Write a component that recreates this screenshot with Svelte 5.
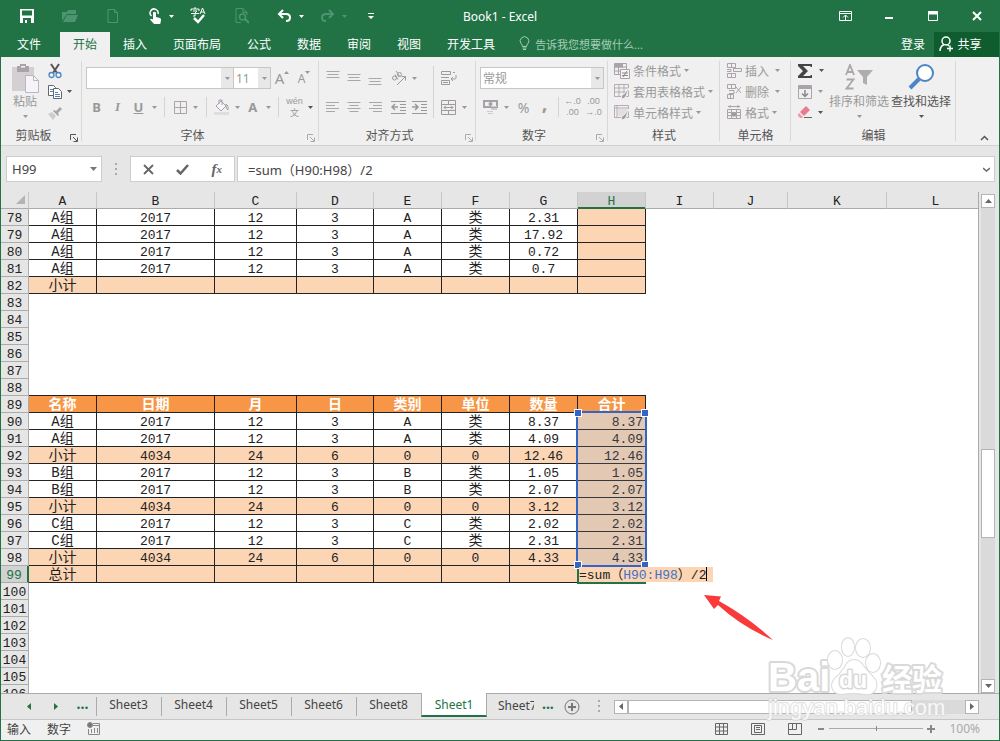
<script lang="ts">
	type Row = { n: number; kind?: string; cells?: string[] };

	const tabs = ['开始', '插入', '页面布局', '公式', '数据', '审阅', '视图', '开发工具'];
	const sheets = ['Sheet3', 'Sheet4', 'Sheet5', 'Sheet6', 'Sheet8', 'Sheet1'];

	const columns = [
		{ name: 'A', width: 68 },
		{ name: 'B', width: 118 },
		{ name: 'C', width: 82 },
		{ name: 'D', width: 77 },
		{ name: 'E', width: 68 },
		{ name: 'F', width: 68 },
		{ name: 'G', width: 68 },
		{ name: 'H', width: 68 },
		{ name: 'I', width: 68 },
		{ name: 'J', width: 74 },
		{ name: 'K', width: 99 },
		{ name: 'L', width: 98 },
	];

	const filled: Record<number, Row> = {};

	function put(n: number, kind: string, text: string) {
		filled[n] = { n, kind, cells: text.split(',') };
	}

	put(78, 'data', 'A组,2017,12,3,A,类,2.31,');
	put(79, 'data', 'A组,2017,12,3,A,类,17.92,');
	put(80, 'data', 'A组,2017,12,3,A,类,0.72,');
	put(81, 'data', 'A组,2017,12,3,A,类,0.7,');
	put(82, 'data sum', '小计,,,,,,,');
	put(89, 'data head', '名称,日期,月,日,类别,单位,数量,合计');
	put(90, 'data', 'A组,2017,12,3,A,类,8.37,8.37');
	put(91, 'data', 'A组,2017,12,3,A,类,4.09,4.09');
	put(92, 'data sum', '小计,4034,24,6,0,0,12.46,12.46');
	put(93, 'data', 'B组,2017,12,3,B,类,1.05,1.05');
	put(94, 'data', 'B组,2017,12,3,B,类,2.07,2.07');
	put(95, 'data sum', '小计,4034,24,6,0,0,3.12,3.12');
	put(96, 'data', 'C组,2017,12,3,C,类,2.02,2.02');
	put(97, 'data', 'C组,2017,12,3,C,类,2.31,2.31');
	put(98, 'data sum', '小计,4034,24,6,0,0,4.33,4.33');
	put(99, 'data sum', '总计,,,,,,,');

	const rows: Row[] = Array.from({ length: 29 }, (_, i) => filled[78 + i] ?? { n: 78 + i });

	let nameBox = 'H99';
	let formula = '=sum（H90:H98）/2';
	let fontName = '';
	let fontSize = '11';
	let numberFormat = '常规';
	let zoom = 50;
	let activeTab = '开始';
	let activeSheet = 'Sheet1';

	const isCjk = (s: string) => /[\u4e00-\u9fff]/.test(s);
</script>

{#snippet caret()}
	<svg class="caret" width="5" height="3" viewBox="0 0 5 3"><path d="M0 0h5L2.5 3z" fill="currentColor" /></svg>
{/snippet}

{#snippet drop(label: string)}
	<button class="drop" aria-label={label}>{@render caret()}</button>
{/snippet}

{#snippet launcher()}
	<button class="launcher" aria-label="更多选项">
		<svg width="8" height="8" viewBox="0 0 8 8" fill="none" stroke="currentColor"><path d="M.5 6V.5H6M3 3l4 4M7.5 3.500v4h-4" /></svg>
	</button>
{/snippet}

{#snippet lines(widths: number[], align: string, top: number)}
	<svg width="16" height="18" viewBox="0 0 16 18" stroke="#a8a8a8">
		{#each widths as w, i}
			<path d="M{align === 'left' ? 1 : align === 'right' ? 15 - w : 8 - w / 2} {top + i * 3 + 0.5}h{w}" />
		{/each}
	</svg>
{/snippet}

<div class="window">
	<header class="titlebar">
		<div class="quick">
			<button aria-label="保存">
				<svg width="14" height="14" viewBox="0 0 14 14"><path fill="#fff" fill-rule="evenodd" d="M0 0h14v14H0zM2 1.500v5h10v-5zM3 9v5h2v-3h2v3h4V9z" /></svg>
			</button>
			<button class="off" aria-label="打开">
				<svg width="16" height="14" viewBox="0 0 16 14"><path fill="currentColor" d="M0 12V3h5l1-2h8v4H5zM5 6h11l-3 7H1z" /></svg>
			</button>
			<button class="off" aria-label="新建">
				<svg width="12" height="14" viewBox="0 0 12 14" fill="none" stroke="currentColor"><path d="M1 .5h6.500l3 3v10H1zM7.500.5v3h3" /></svg>
			</button>
			<button class="split" aria-label="触摸模式">
				<svg width="15" height="17" viewBox="0 0 15 17"><path d="M3.500 8A4 4 0 1 1 10 6" fill="none" stroke="#fff" stroke-width="1.500" /><path d="M5 4.500q1.500-1.500 3 0V9l4 1q1.500.5 1 2.500l-.8 3.500H6L2 11.500q.5-1.500 3 0z" fill="#fff" /></svg>
				{@render caret()}
			</button>
			<button aria-label="拼写检查">
				<svg width="18" height="18" viewBox="0 0 18 18" fill="none" stroke="#fff"><path d="M1 4V2h8v2M5 0v2M3 4h4L5 6v3H3M1 6.500h8M10 7l2.500-6L15 7M11 5h3" /><path d="M4 11l4 4 6-7" stroke-width="2.500" /></svg>
			</button>
			<button class="off" aria-label="打印预览">
				<svg width="14" height="16" viewBox="0 0 14 16" fill="none" stroke="currentColor"><path d="M6 14.500H1V.5h7l4 4V7M8 .5v4h4" /><circle cx="7.500" cy="9" r="3" stroke-width="1.500" /><path d="M10 11l4 4" stroke-width="2" /></svg>
			</button>
			<button class="split" aria-label="撤消">
				<svg width="16" height="14" viewBox="0 0 16 14" fill="none" stroke="#fff" stroke-width="2"><path d="M6 1L2 5l4 4M2 5h7q4 0 4 3.500T9 12" /></svg>
				{@render caret()}
			</button>
			<button class="split off" aria-label="恢复">
				<svg width="16" height="14" viewBox="0 0 16 14" fill="none" stroke="currentColor" stroke-width="2"><path d="M9 1l4 4-4 4M13 5H6Q2 5 2 8.500T6 12" /></svg>
				{@render caret()}
			</button>
			<button aria-label="自定义快速访问工具栏">
				<svg width="6" height="7" viewBox="0 0 6 7" fill="#fff"><path d="M0 0h6v1H0zM0 3h6L3 6z" /></svg>
			</button>
		</div>
		<div class="title">Book1 - Excel</div>
		<div class="controls">
			<button aria-label="功能区显示选项">
				<svg width="13" height="10" viewBox="0 0 13 10" fill="none" stroke="#fff"><path d="M.5.5h12v9H.5zM1 2.500h11M6.500 9V4M4 6.500L6.500 4 9 6.500" /></svg>
			</button>
			<button aria-label="最小化"><svg width="10" height="10" viewBox="0 0 10 10"><path d="M1 6h8v2H1z" fill="#fff" /></svg></button>
			<button aria-label="最大化"><svg width="10" height="10" viewBox="0 0 10 10" fill="none" stroke="#fff"><path d="M.5.5h9v9h-9z" /><path d="M0 2h10" stroke-width="3" /></svg></button>
			<button aria-label="关闭"><svg width="10" height="10" viewBox="0 0 10 10"><path d="M1 1l8 8M9 1L1 9" stroke="#fff" stroke-width="2" /></svg></button>
		</div>
	</header>

	<nav class="tabs">
		<button class="file">文件</button>
		{#each tabs as tab}
			<button class:active={tab === activeTab} on:click={() => (activeTab = tab)}>{tab}</button>
		{/each}
		<button class="tell">
			<svg width="11" height="15" viewBox="0 0 11 15" fill="none" stroke="currentColor"><path d="M3.500 10.500Q3.500 9 2 7.500a4.300 4.300 0 1 1 7 0Q7.500 9 7.500 10.500zM3.500 12h4M4 13.500h3" /></svg>
			告诉我您想要做什么...
		</button>
		<button class="login">登录</button>
		<button class="share">
			<svg width="15" height="16" viewBox="0 0 15 16" fill="none" stroke="#fff" stroke-width="1.500"><circle cx="7" cy="5" r="4" /><path d="M1 15q0-4.500 4-6.500M8.500 9l1.500 1M8 12.500h6M11 9.500v6" /></svg>
			共享
		</button>
	</nav>

	<section class="ribbon">
		<div class="group clipboard">
			<div class="body">
				<button class="big">
					<svg width="27" height="29" viewBox="0 0 27 29"><path d="M0 3h22v24H0z" fill="#d3cfd3" /><path d="M5 2h3V0h6v2h3v6H5zM9 2v2h4V2z" fill="#a8a4a8" fill-rule="evenodd" /><path d="M13.500 11.500h8l5 5v12h-13z" fill="#f7f3fa" stroke="#bcb6bc" /><path d="M21.500 11.500v5h5" fill="none" stroke="#bcb6bc" /></svg>
					<span>粘贴</span>
					{@render caret()}
				</button>
				<div class="stack dark">
					<button class="item" aria-label="剪切">
						<svg width="16" height="16" viewBox="0 0 16 16" fill="none"><path d="M4 1l6 9M12 1l-6 9" stroke="#555" stroke-width="2" /><circle cx="4.500" cy="12" r="2.500" stroke="#4a86c5" stroke-width="1.300" /><circle cx="11.500" cy="12" r="2.500" stroke="#4a86c5" stroke-width="1.300" /></svg>
					</button>
					<button class="item" aria-label="复制">
						<svg width="16" height="14" viewBox="0 0 16 14" fill="#fff" stroke="#666"><path d="M1.500.5h5l2 2v8h-7z" /><path d="M6.500 3.500h5l3 3v7h-8z" /><path d="M3 4.500h3M3 6.500h3M8 7.500h3M8 9.500h5M8 11.500h5" stroke="#4a86c5" /></svg>
						{@render caret()}
					</button>
					<button class="item" aria-label="格式刷">
						<svg width="16" height="15" viewBox="0 0 16 15"><path d="M1 9l4-2 4 4-3 4z" fill="#cfcbcf" /><path d="M6 6l1-1 2 1 4-4 2 2-4 4 1 2-1 1z" fill="#a8a4a8" /></svg>
					</button>
				</div>
			</div>
			<div class="caption dark">剪贴板{@render launcher()}</div>
		</div>

		<div class="group font">
			<div class="body rows">
				<div class="line">
					<div class="combo grow">
						<input aria-label="字体" bind:value={fontName} />
						{@render drop('选择字体')}
					</div>
					<div class="combo size">
						<input aria-label="字号" bind:value={fontSize} />
						{@render drop('选择字号')}
					</div>
					<button class="ib letter" aria-label="增大字号">A<svg width="5" height="14" viewBox="0 0 5 14"><path d="M0 3h5L2.500 0z" fill="#999" /></svg></button>
					<button class="ib letter small" aria-label="减小字号">A<svg width="5" height="14" viewBox="0 0 5 14"><path d="M0 0h5L2.500 3z" fill="#999" /></svg></button>
				</div>
				<div class="line">
					<button class="ib"><b>B</b></button>
					<button class="ib"><i>I</i></button>
					<button class="ib"><b><u>U</u></b></button>
					{@render drop('下划线')}
					<span class="sep"></span>
					<button class="ib" aria-label="边框">
						<svg width="13" height="13" viewBox="0 0 13 13" fill="none" stroke="#aaa3aa"><path d="M.5.5h12v12H.5zM6.500 0v13M0 6.500h13" /></svg>
					</button>
					{@render drop('边框样式')}
					<span class="sep"></span>
					<button class="ib" aria-label="填充颜色">
						<svg width="16" height="16" viewBox="0 0 16 16"><path d="M7 2l5 5-5 5-5-5z" fill="#f7f3fa" stroke="#a8a0a8" /><path d="M5 5V1h3v5M12 5q3 1 2 6-2-1-2-4z" fill="none" stroke="#a8a0a8" /><path d="M0 13h15v3H0z" fill="#e2dce2" /></svg>
					</button>
					{@render drop('选择填充颜色')}
					<button class="ib"><b>A</b></button>
					{@render drop('字体颜色')}
					<span class="sep"></span>
					<button class="ib pinyin"><span>wén</span><span>文</span></button>
					<span class="dark">{@render drop('拼音')}</span>
				</div>
			</div>
			<div class="caption">字体{@render launcher()}</div>
		</div>

		<div class="group align">
			<div class="body">
				<div class="rows">
					<div class="line">
						<button class="ib" aria-label="顶端对齐">{@render lines([13, 11, 13], 'center', 2)}</button>
						<button class="ib" aria-label="垂直居中">{@render lines([13, 11, 13], 'center', 5)}</button>
						<button class="ib" aria-label="底端对齐">{@render lines([13, 11, 13], 'center', 9)}</button>
						<button class="ib shift" aria-label="方向">
							<svg width="16" height="16" viewBox="0 0 16 16" fill="none" stroke="#999"><circle cx="3.500" cy="8" r="2" /><path d="M4 4.500l3 5M5 1l4 6" /><circle cx="8.500" cy="4.500" r="2" /><path d="M6 15l8-8M10.500 6.500H14.500V10.500" /></svg>
						</button>
						{@render drop('文字方向')}
					</div>
					<div class="line">
						<button class="ib" aria-label="左对齐">{@render lines([13, 9, 13, 9], 'left', 4)}</button>
						<button class="ib" aria-label="居中">{@render lines([13, 9, 13, 9], 'center', 4)}</button>
						<button class="ib" aria-label="右对齐">{@render lines([13, 9, 13, 9], 'right', 4)}</button>
						<button class="ib shift" aria-label="减少缩进">
							<svg width="16" height="14" viewBox="0 0 16 14" fill="none" stroke="#999"><path d="M0 1.500h15M9 4.500h6M9 7.500h6M9 10.500h6M0 13.500h15" /><path d="M1 7h6M4 4L1 7l3 3" stroke-width="1.500" /></svg>
						</button>
						<button class="ib" aria-label="增加缩进">
							<svg width="16" height="14" viewBox="0 0 16 14" fill="none" stroke="#999"><path d="M0 1.500h15M9 4.500h6M9 7.500h6M9 10.500h6M0 13.500h15" /><path d="M0 7h6M3 4l3 3-3 3" stroke-width="1.500" /></svg>
						</button>
					</div>
				</div>
				<span class="sep tall"></span>
				<div class="rows">
					<div class="line">
						<button class="ib" aria-label="自动换行">
							<svg width="16" height="15" viewBox="0 0 16 15" fill="none" stroke="#a09aa0"><path d="M.5.5h9v3h-9zM0 6.500h8M.5 9.500h8v4h-8zM2 11.500h5M12 1.500h2M15 4v3q0 1-2 1h-3M12 6l-2 2 2 2" /></svg>
						</button>
					</div>
					<div class="line">
						<button class="ib" aria-label="合并后居中">
							<svg width="15" height="15" viewBox="0 0 15 15" fill="none" stroke="#a09aa0"><path d="M.5.5h14v14H.5zM0 4.500h15M0 10.500h15M7.500 0v4M7.500 11v4M3 7.500h9M5 5.500l-2 2 2 2M10 5.500l2 2-2 2" /></svg>
						</button>
						{@render drop('合并')}
					</div>
				</div>
			</div>
			<div class="caption">对齐方式{@render launcher()}</div>
		</div>

		<div class="group number">
			<div class="body rows">
				<div class="line">
					<div class="combo grow">
						<input aria-label="数字格式" bind:value={numberFormat} />
						{@render drop('选择数字格式')}
					</div>
				</div>
				<div class="line">
					<button class="ib" aria-label="会计数字格式">
						<svg width="17" height="16" viewBox="0 0 17 16"><path d="M1 1h15v8H1zM3 3v4h11V3z" fill="#a8a0a8" fill-rule="evenodd" /><circle cx="8.500" cy="5" r="2" fill="#a8a0a8" /><path d="M9 7h6v1H9zM9 9h6v2H9zM5 12h6v1H5zM6 14h5v1H6z" fill="#d0cad0" /></svg>
					</button>
					{@render drop('货币')}
					<button class="ib pct">%</button>
					<button class="ib comma">,</button>
					<span class="sep"></span>
					<button class="ib decimals"><span>←.0</span><span>.00</span></button>
					<button class="ib decimals"><span>.00</span><span>→.0</span></button>
				</div>
			</div>
			<div class="caption">数字{@render launcher()}</div>
		</div>

		<div class="group styles">
			<div class="body stack">
				<button class="item">
					<svg width="16" height="16" viewBox="0 0 16 16" fill="none" stroke="#aaa3aa"><path d="M.5.500h12v11H.5zM0 4h12M0 8h7M4.500 0v12M8.500 0v5" /><path d="M1 1h7v3H1z" fill="#aaa3aa" /><path d="M6.500 6.500h9v9h-9z" fill="#f4f4f4" /><path d="M8 10h6M8 12.500h6M13 8l-4 6" stroke="#888" /></svg>
					条件格式{@render caret()}
				</button>
				<button class="item">
					<svg width="16" height="15" viewBox="0 0 16 15" fill="none" stroke="#b4adb4"><path d="M.5.500h14v12H.5zM0 4h15M0 8h15M5 0v13M10 0v13" /><path d="M15 4l-5 6-2 1-1 4q4 0 5-3z" fill="#a09aa0" stroke="#f0f0f0" /></svg>
					套用表格格式{@render caret()}
				</button>
				<button class="item">
					<svg width="16" height="15" viewBox="0 0 16 15" fill="none" stroke="#b4adb4"><path d="M.5.500h14v12H.5zM0 3h15M3 0v13" /><path d="M4 4h9v7H4z" fill="#e4dee4" stroke="none" /><path d="M15 4l-5 6-2 1-1 4q4 0 5-3z" fill="#a09aa0" stroke="#f0f0f0" /></svg>
					单元格样式{@render caret()}
				</button>
			</div>
			<div class="caption">样式</div>
		</div>

		<div class="group cells">
			<div class="body stack">
				<button class="item">
					<svg width="15" height="15" viewBox="0 0 15 15" fill="none" stroke="#aaa3aa"><path d="M.5.500h8v4h-8zM.5 10.500h8v4h-8zM4.500 0v4M4.500 10v5M0 6.500h4v2H0M6.500 5.500h8v3h-8z" /></svg>
					插入<span></span>{@render caret()}
				</button>
				<button class="item">
					<svg width="15" height="15" viewBox="0 0 15 15" fill="none" stroke="#aaa3aa"><path d="M.5.500h8v4h-8zM.5 10.500h6v4h-6zM4.500 0v4M3.500 10v5M2 6.500h5v3H2M9 3l5 6M14 3l-5 6" /></svg>
					删除<span></span>{@render caret()}
				</button>
				<button class="item">
					<svg width="15" height="15" viewBox="0 0 15 15" fill="none" stroke="#aaa3aa"><path d="M1 1.500h12M3 0v3M11 0v3M.5 4.500h13v9H.5zM0 7.500h14M0 10.500h14M4.500 4v10M9.500 4v10" /><path d="M5 8h4v3H5z" fill="#999" /></svg>
					格式{@render caret()}
				</button>
			</div>
			<div class="caption">单元格</div>
		</div>

		<div class="group editing">
			<div class="body">
				<div class="stack">
					<button class="item dark" aria-label="自动求和">
						<svg width="15" height="14" viewBox="0 0 15 14"><path d="M0 0h14v3h-1l-1-1H5l5 5-5 5h7l1-1h1v3H0v-2l5-5-5-5z" fill="#444" /></svg>
						{@render caret()}
					</button>
					<button class="item" aria-label="填充">
						<svg width="14" height="14" viewBox="0 0 14 14" fill="none" stroke="#aaa3aa"><path d="M.5.500h13v13H.5z" /><path d="M1 2.500h12" stroke-width="3" /><path d="M7 5v6M4 8.500l3 3 3-3" stroke-width="1.500" stroke="#888" /></svg>
						{@render caret()}
					</button>
					<button class="item dark" aria-label="清除">
						<svg width="14" height="13" viewBox="0 0 14 13"><path d="M7 1l1-1 4 4-1 1-5 5-4-4z" fill="#ea7b8f" /><path d="M0 8l1-1 4 4-1 1H2L0 10z" fill="#f29aaa" /><path d="M6 11.500h8" stroke="#666" /></svg>
						{@render caret()}
					</button>
				</div>
				<button class="big">
					<svg width="28" height="26" viewBox="0 0 28 26"><path d="M1 11L5 1l4 10M2.500 8h5M1.500 15.500h7l-7 9h7" fill="none" stroke="#aaa6aa" stroke-width="1.800" /><path d="M12 6h16l-6 7v8l-4-2v-6z" fill="#b0acb0" /></svg>
					<span>排序和筛选</span>
					{@render caret()}
				</button>
				<button class="big dark">
					<svg width="28" height="26" viewBox="0 0 28 26"><circle cx="18" cy="9" r="8" fill="#fff" stroke="#4a86c5" stroke-width="2" /><path d="M12 15L3 24" stroke="#4a86c5" stroke-width="4" /></svg>
					<span>查找和选择</span>
					{@render caret()}
				</button>
			</div>
			<div class="caption">编辑</div>
		</div>

		<button class="collapse" aria-label="折叠功能区">
			<svg width="9" height="6" viewBox="0 0 9 6"><path d="M1 5l3.500-3.500L8 5" fill="none" stroke="#555" stroke-width="1.500" /></svg>
		</button>
	</section>

	<section class="formula-bar">
		<div class="field name">
			<input aria-label="名称框" bind:value={nameBox} />
			<button aria-label="名称列表"><svg width="7" height="4" viewBox="0 0 7 4"><path d="M0 0h7L3.500 4z" fill="#777" /></svg></button>
		</div>
		<span class="dots"></span>
		<div class="field actions">
			<button aria-label="取消"><svg width="11" height="11" viewBox="0 0 11 11"><path d="M1 1l9 9M10 1l-9 9" stroke="#666" stroke-width="1.800" /></svg></button>
			<button aria-label="输入"><svg width="13" height="11" viewBox="0 0 13 11"><path d="M1 6l3.500 3.500L12 1" fill="none" stroke="#666" stroke-width="2.500" /></svg></button>
			<button class="fx" aria-label="插入函数">f<small>x</small></button>
		</div>
		<div class="field formula">
			<input aria-label="编辑栏" bind:value={formula} />
			<button aria-label="展开编辑栏"><svg width="7" height="5" viewBox="0 0 7 5"><path d="M0 1l3.500 3L7 1" fill="none" stroke="#666" stroke-width="1.500" /></svg></button>
		</div>
	</section>

	<main class="workspace">
		<div class="sheet">
			<table>
				<colgroup>
					<col style="width: 28px" />
					{#each columns as col}
						<col style="width: {col.width}px" />
					{/each}
				</colgroup>
				<thead>
					<tr>
						<th class="corner" aria-label="全选"><svg width="9" height="9" viewBox="0 0 9 9"><path d="M9 0v9H0z" fill="#b4b4b4" /></svg></th>
						{#each columns as col}
							<th class:picked={col.name === 'H'}>{col.name}</th>
						{/each}
					</tr>
				</thead>
				<tbody>
					{#each rows as row}
						<tr class={row.kind} class:above={row.n === 88}>
							<th class:picked={row.n === 99}>{row.n}</th>
							{#each columns as col, c}
								<td class:used={c < 8} class:cjk={isCjk(row.cells?.[c] ?? '')} class:total={c === 7}>
									{row.cells?.[c] ?? ''}
									{#if row.n === 90 && c === 7}
										<div class="range"><i></i><i></i><i></i><i></i></div>
									{:else if row.n === 99 && c === 7}
										<div class="frame"></div>
										<div class="editor" role="textbox" tabindex="0" aria-label="H99">=sum（<span>H90:H98</span>）/2</div>
									{/if}
								</td>
							{/each}
						</tr>
					{/each}
				</tbody>
			</table>
			<svg class="arrow" width="70" height="48" viewBox="0 0 70 48"><path d="M0 1l17 1.500-2 4.500Q44 23 69 46 38 33 14 11l-4 4z" fill="#f9393a" /></svg>
		</div>
		<div class="vscroll">
			<button aria-label="向上滚动"><svg width="7" height="4" viewBox="0 0 7 4"><path d="M0 4h7L3.500 0z" fill="#666" /></svg></button>
			<div class="track"><div class="thumb"></div></div>
			<button aria-label="向下滚动"><svg width="7" height="4" viewBox="0 0 7 4"><path d="M0 0h7L3.500 4z" fill="#666" /></svg></button>
		</div>
	</main>

	<nav class="sheetbar">
		<div class="steps">
			<button aria-label="上一张"><svg width="4" height="7" viewBox="0 0 4 7"><path d="M4 0v7L0 3.500z" fill="#217346" /></svg></button>
			<button aria-label="下一张"><svg width="4" height="7" viewBox="0 0 4 7"><path d="M0 0v7l4-3.500z" fill="#217346" /></svg></button>
			<button class="more">...</button>
		</div>
		{#each sheets as name}
			<button class="tab" class:active={name === activeSheet} on:click={() => (activeSheet = name)}>{name}</button>
		{/each}
		<button class="cut">Sheet7</button>
		<button class="more">...</button>
		<button class="add" aria-label="新工作表">
			<svg width="16" height="16" viewBox="0 0 16 16" fill="none" stroke="#777"><circle cx="8" cy="8" r="7" /><path d="M8 4v8M4 8h8" stroke-width="2" /></svg>
		</button>
		<span class="dots"></span>
		<div class="hscroll">
			<button aria-label="向左滚动"><svg width="4" height="7" viewBox="0 0 4 7"><path d="M4 0v7L0 3.500z" fill="#666" /></svg></button>
			<div class="thumb"></div>
			<div class="rest"></div>
			<button aria-label="向右滚动"><svg width="4" height="7" viewBox="0 0 4 7"><path d="M0 0v7l4-3.500z" fill="#666" /></svg></button>
		</div>
	</nav>

	<footer class="status">
		<span>输入</span>
		<span>数字</span>
		<svg width="13" height="13" viewBox="0 0 13 13" fill="none" stroke="#888"><circle cx="3" cy="3" r="2.500" fill="#777" /><path d="M6 1.500h6.500v11h-11V7M6 3.500h6M4.500 7v4M7.500 6v5M10.500 6v5" /></svg>
		<div class="views">
			<button aria-label="普通"><svg width="13" height="12" viewBox="0 0 13 12" fill="none" stroke="#666"><path d="M.5.500h12v11H.5zM0 4h13M0 8h13M4.500 0v12M8.500 0v12" /></svg></button>
			<button aria-label="页面布局"><svg width="14" height="12" viewBox="0 0 14 12" fill="none" stroke="#666"><path d="M.5.500h13v11H.5zM3.500 2.500h7v7h-7zM5 4.500h4M5 6.500h4" /></svg></button>
			<button aria-label="分页预览"><svg width="14" height="12" viewBox="0 0 14 12" fill="none" stroke="#666"><path d="M.5.500h13v11H.5zM4.500 0v6.500M8.500 0v6.500H0" /></svg></button>
		</div>
		<button aria-label="缩小"><svg width="8" height="8" viewBox="0 0 8 8"><path d="M1 4h6" stroke="#888" stroke-width="2" /></svg></button>
		<input type="range" min="0" max="100" aria-label="缩放" bind:value={zoom} />
		<button aria-label="放大"><svg width="8" height="8" viewBox="0 0 8 8"><path d="M0 4h8M4 0v8" stroke="#888" stroke-width="2" /></svg></button>
		<span class="percent">100%</span>
	</footer>

	<svg class="watermark" width="180" height="92" viewBox="0 0 180 92">
		<g font-weight="bold">
			<text x="1" y="59" font-size="40">Bai</text>
			<text x="115" y="58" font-size="30">经验</text>
		</g>
		<g class="paw">
			<ellipse cx="68" cy="28" rx="7" ry="9" />
			<ellipse cx="81" cy="15" rx="6" ry="9" />
			<ellipse cx="96" cy="16" rx="7" ry="9" />
			<ellipse cx="106" cy="31" rx="7" ry="9" />
			<path d="M87 28q6 0 10 7 4 5 8 9 7 7 3 14-3 5-10 4-12-2-23 0-9 0-10-8 0-6 7-11l6-8q3-7 9-7z" />
		</g>
		<text class="inner" x="72" y="56" font-size="23" font-weight="bold">du</text>
		<text class="url" x="1" y="83" font-size="22">jingyan.baidu.com</text>
	</svg>
</div>

<style>
	:global(body) {
		margin: 0;
	}

	.window {
		position: relative;
		box-sizing: border-box;
		height: 100vh;
		display: flex;
		flex-direction: column;
		overflow: hidden;
		border: 1px solid #217346;
		border-top: 0;
		background: #e6e6e6;
		color: #444;
		font: 12px 'Noto Sans', 'Noto Sans CJK SC', sans-serif;
	}

	.window * {
		box-sizing: border-box;
	}

	button,
	input {
		font: inherit;
		color: inherit;
		background: none;
		border: 0;
		padding: 0;
		margin: 0;
		min-width: 0;
		outline: 0;
	}

	button {
		display: flex;
		align-items: center;
		justify-content: center;
		white-space: nowrap;
		flex-shrink: 0;
	}

	svg {
		flex-shrink: 0;
	}

	.titlebar {
		display: grid;
		grid-template-columns: 1fr auto 1fr;
		align-items: center;
		height: 32px;
		background: #217346;
		color: #fff;
	}

	.quick {
		display: flex;
		padding-left: 4px;
	}

	.quick button {
		width: 43px;
		height: 30px;
	}

	.quick .split {
		justify-content: flex-start;
		padding-left: 14px;
		gap: 6px;
	}

	.quick .off {
		color: #4f9470;
	}

	.controls {
		display: flex;
		justify-content: flex-end;
	}

	.controls button {
		width: 44px;
		height: 30px;
	}

	.tabs {
		display: flex;
		height: 25px;
		background: #217346;
		color: #fff;
	}

	.tabs button {
		padding: 0 13px 2px;
	}

	.tabs .file {
		width: 56px;
		margin-right: 3px;
	}

	.tabs .active {
		background: #f0f0f0;
		color: #217346;
	}

	.tabs .tell {
		gap: 5px;
		padding-left: 11px;
		font-size: 11px;
		color: #a5cdb6;
	}

	.tabs .login {
		margin-left: auto;
		padding: 0 9px 2px;
	}

	.tabs .share {
		width: 65px;
		padding: 0 12px 2px 0;
		gap: 3px;
		background: #0f5c2f;
	}

	.ribbon {
		display: flex;
		height: 89px;
		background: #f0f0f0;
		border-bottom: 1px solid #d2d2d2;
		color: #999;
	}

	.group {
		position: relative;
		display: flex;
		flex-direction: column;
		flex: 0 0 auto;
		padding: 0 4px;
	}

	.group::after {
		content: '';
		position: absolute;
		right: 0;
		top: 4px;
		bottom: 4px;
		border-right: 1px solid #d8d8d8;
	}

	.clipboard {
		width: 81px;
	}

	.font {
		width: 237px;
	}

	.align {
		width: 157px;
		padding: 0 3px;
	}

	.number {
		width: 132px;
	}

	.styles {
		width: 112px;
		padding: 0 6px;
	}

	.cells {
		width: 71px;
		padding: 0 7px;
	}

	.editing {
		width: 165px;
	}

	.body {
		display: flex;
		height: 68px;
	}

	.caption {
		position: relative;
		display: flex;
		align-items: center;
		justify-content: center;
		height: 20px;
		color: #555;
	}

	.clipboard .caption,
	.font .caption,
	.number .caption,
	.align .caption {
		padding-right: 16px;
	}

	.launcher {
		position: absolute;
		right: 0;
		bottom: 3px;
		color: #aaa;
	}

	.dark,
	.caption.dark .launcher {
		color: #555;
	}

	.rows {
		display: flex;
		flex-direction: column;
		gap: 7px;
		padding-top: 10px;
	}

	.line {
		display: flex;
		align-items: center;
		height: 22px;
	}

	.ib {
		width: 21px;
		height: 22px;
		font-size: 13px;
	}

	.shift {
		margin-left: 3px;
	}

	.ib i {
		font-family: 'Liberation Serif', serif;
		font-weight: bold;
	}

	.letter {
		width: 22px;
		font-size: 15px;
	}

	.small {
		font-size: 12px;
	}

	.pct {
		font-size: 14px;
		margin-left: 2px;
	}

	.comma {
		font-size: 20px;
		font-weight: bold;
		line-height: 12px;
		padding-bottom: 8px;
	}

	.pinyin,
	.decimals {
		flex-direction: column;
		font: 9px 'Liberation Sans', 'Noto Sans CJK SC', sans-serif;
	}

	.pinyin span {
		height: 12px;
		line-height: 12px;
	}

	.decimals span {
		height: 11px;
		line-height: 11px;
	}

	.drop {
		width: 10px;
		height: 20px;
	}

	.sep {
		width: 1px;
		height: 20px;
		margin: 0 5px;
		background: #d4d4d4;
	}

	.number .sep {
		margin: 0 3px;
	}

	.sep.tall {
		height: 52px;
		margin: 9px 4px 0 3px;
	}

	.combo {
		display: flex;
		align-items: center;
		height: 22px;
		border: 1px solid #c6c6c6;
		background: #fff;
	}

	.combo input {
		flex: 1;
		width: 0;
		padding-left: 2px;
	}

	.combo .drop {
		width: 12px;
		background: #e8e8e8;
	}

	.grow {
		flex: 1;
	}

	.combo.size {
		width: 37px;
		border-left: 0;
	}

	.big {
		flex-direction: column;
		justify-content: flex-start;
		width: 62px;
		padding-top: 7px;
	}

	.big span {
		height: 18px;
		line-height: 18px;
		margin-bottom: 4px;
	}

	.editing .big svg:first-child {
		margin-bottom: 3px;
	}

	.clipboard .big {
		width: 40px;
	}

	.stack {
		display: flex;
		flex-direction: column;
		align-items: stretch;
		padding-top: 3px;
	}

	.item {
		height: 21px;
		justify-content: flex-start;
		gap: 3px;
	}

	.clipboard .item {
		gap: 4px;
		padding-left: 2px;
	}

	.editing .stack {
		width: 35px;
		padding-left: 3px;
	}

	.editing .item {
		gap: 6px;
	}

	.collapse {
		margin: auto 10px 4px auto;
	}

	.formula-bar {
		display: flex;
		align-items: center;
		height: 46px;
		padding: 0 4px 0 5px;
	}

	.field {
		display: flex;
		height: 26px;
		border: 1px solid #cdcdcd;
		background: #fff;
		font-size: 13px;
	}

	.field input {
		flex: 1;
		width: 0;
	}

	.name {
		width: 96px;
		padding: 0 4px 0 5px;
	}

	.dots {
		width: 2px;
		height: 12px;
		margin: 0 13px;
		background: repeating-linear-gradient(#aaa 0 2px, transparent 2px 5px);
	}

	.actions {
		width: 105px;
		margin-right: 2px;
	}

	.actions button {
		flex: 1;
	}

	.fx {
		font: italic bold 15px 'Liberation Serif', serif;
		color: #666;
	}

	.fx small {
		font-size: 11px;
	}

	.formula {
		flex: 1;
		padding: 0 4px 0 10px;
	}

	.workspace {
		flex: 1;
		min-height: 0;
		display: flex;
	}

	.sheet {
		position: relative;
		flex: 1;
		min-width: 0;
		overflow: hidden;
		background: linear-gradient(#e6e6e6 17px, #fff 17px);
		border-right: 1px solid #ababab;
	}

	table {
		width: 984px;
		table-layout: fixed;
		border-collapse: separate;
		border-spacing: 0;
		font: 13px 'Liberation Mono', 'Noto Sans CJK SC', monospace;
		color: #222;
	}

	th,
	td {
		height: 17px;
		padding: 3px 0 0;
		line-height: 13px;
		font-weight: normal;
		text-align: center;
		white-space: nowrap;
	}

	th {
		background: #e6e6e6;
		border-right: 1px solid #ababab;
		border-bottom: 1px solid #ababab;
		overflow: hidden;
	}

	thead th {
		border-right-color: #c6c6c6;
	}

	.corner {
		text-align: right;
		padding: 0 3px 0 0;
	}

	thead .picked {
		background: #d2d2d2;
		color: #217346;
		border-bottom-color: #217346;
		box-shadow: inset 0 -1px #217346;
	}

	tbody .picked {
		background: #d2d2d2;
		color: #217346;
		border-right: 2px solid #217346;
	}

	td {
		position: relative;
	}

	.above .used {
		border-bottom: 1px solid #222;
	}

	.data .used {
		border-right: 1px solid #222;
		border-bottom: 1px solid #222;
	}

	.cjk {
		font-size: 14px;
	}

	.sum .used,
	.data .total {
		background: #fcd5b4;
	}

	.head .used {
		background: #f79646;
		color: #fff;
		font-weight: bold;
	}

	.data:not(.head) .total {
		text-align: right;
		padding-right: 2px;
	}

	/* nine rows of column H, starting at H90 */
	.range {
		position: absolute;
		z-index: 1;
		inset: -2px -2px auto -2px;
		height: 156px;
		border: 2px solid #3465c4;
		background: rgba(132, 148, 180, 0.2);
	}

	.range i {
		position: absolute;
		width: 6px;
		height: 6px;
		background: #3465c4;
		outline: 1px solid #fff;
	}

	.range i:nth-child(1) {
		left: -3px;
		top: -3px;
	}

	.range i:nth-child(2) {
		right: -3px;
		top: -3px;
	}

	.range i:nth-child(3) {
		left: -3px;
		bottom: -3px;
	}

	.range i:nth-child(4) {
		right: -3px;
		bottom: -3px;
	}

	.frame {
		position: absolute;
		inset: -1px -1px -2px -1px;
		border: 2px solid #217346;
	}

	.editor {
		position: absolute;
		z-index: 1;
		left: 1px;
		top: 1px;
		width: 134px;
		height: 15px;
		line-height: 17px;
		text-align: left;
		background: #fcd5b4;
	}

	.editor::after {
		content: '';
		display: inline-block;
		height: 14px;
		border-left: 1px solid #000;
		vertical-align: top;
	}

	.editor span {
		color: #4472c4;
	}

	.arrow {
		position: absolute;
		left: 703px;
		top: 402px;
	}

	.vscroll {
		display: flex;
		flex-direction: column;
		width: 20px;
		padding: 2px 3px 0 2px;
	}

	.vscroll button,
	.hscroll button {
		width: 14px;
		height: 14px;
		background: #fff;
		border: 1px solid #b4b4b4;
	}

	.track {
		flex: 1;
		width: 14px;
		display: flex;
		flex-direction: column;
		background: #dadada;
	}

	.track .thumb {
		height: 19%;
		margin-top: auto;
		margin-bottom: 141px;
		background: #fff;
		border: 1px solid #b4b4b4;
	}

	.sheetbar {
		display: flex;
		height: 27px;
		border-top: 1px solid #ababab;
		border-bottom: 1px solid #c6c6c6;
	}

	.steps {
		display: flex;
		width: 95px;
		padding-left: 14px;
	}

	.steps button {
		width: 27px;
	}

	.more {
		color: #217346;
		font-weight: bold;
		font-size: 14px;
		padding-bottom: 6px;
	}

	.tab {
		width: 65px;
		height: 24px;
		margin-top: -1px;
		padding-bottom: 1px;
		background: linear-gradient(#ababab, #ababab) left 4px / 1px 19px no-repeat;
	}

	.sheetbar .active {
		width: 66px;
		padding: 0;
		background: #fff;
		color: #217346;
		border: 1px solid #ababab;
		border-width: 0 1px 2px;
		border-bottom-color: #217346;
	}

	.cut {
		width: 36px;
		height: 22px;
		margin: 0 8px 0 11px;
		justify-content: flex-start;
		overflow: hidden;
	}

	.add {
		width: 36px;
	}

	.sheetbar .dots {
		margin: 6px 14px 0 8px;
	}

	.hscroll {
		flex: 1;
		display: flex;
		align-items: center;
		margin-right: 20px;
	}

	.hscroll .thumb {
		flex: 283;
		height: 14px;
		background: #fff;
		border: 1px solid #b4b4b4;
	}

	.hscroll .rest {
		flex: 53;
		height: 14px;
		background: #dadada;
	}

	.status {
		display: flex;
		align-items: center;
		height: 20px;
		padding: 0 19px 3px 6px;
		background: #f0f0f0;
	}

	.status > span {
		margin-right: 16px;
	}

	.views {
		display: flex;
		gap: 23px;
		margin-left: auto;
		margin-right: 15px;
	}

	input[type='range'] {
		appearance: none;
		width: 94px;
		height: 8px;
		margin: 0 4px;
		background: linear-gradient(#aaa, #aaa) center / 100% 1px no-repeat;
	}

	input[type='range']::-webkit-slider-thumb {
		appearance: none;
		width: 1px;
		height: 5px;
		background: #888;
	}

	.status .percent {
		margin: 0 0 0 14px;
		color: #aaa;
	}

	.watermark {
		position: absolute;
		right: 52px;
		bottom: 16px;
		z-index: 2;
		pointer-events: none;
		fill: #fff;
		stroke: #d9d9d9;
		stroke-width: 4px;
		stroke-linejoin: round;
		paint-order: stroke;
		font-family: 'Liberation Sans', 'Noto Sans CJK SC', sans-serif;
	}

	.paw {
		stroke-width: 2px;
	}

	.inner {
		stroke-width: 3px;
	}

	.url {
		stroke-width: 2px;
		opacity: 0.8;
	}
</style>
